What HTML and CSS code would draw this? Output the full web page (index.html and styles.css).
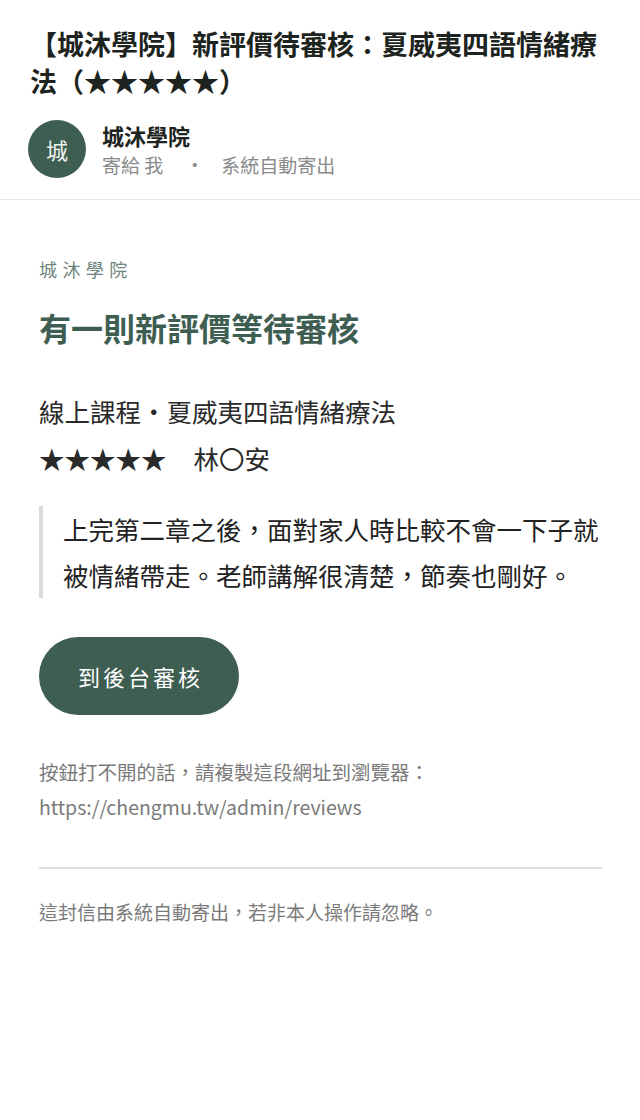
FILE: index.html
```html
<!DOCTYPE html>
<html lang="zh-Hant">
<head>
<meta charset="utf-8">
<title>新評價待審核</title>
<link rel="stylesheet" href="styles.css">
</head>
<body>
<div class="mail">
  <header class="mail-head">
    <h1 class="subject">【城沐學院】新評價待審核：夏威夷四語情緒療法（★★★★★）</h1>
    <div class="sender">
      <div class="avatar">城</div>
      <div class="sender-info">
        <div class="sender-name">城沐學院</div>
        <div class="sender-meta"><span>寄給 我</span><span class="dot">·</span><span>系統自動寄出</span></div>
      </div>
    </div>
  </header>
  <main class="mail-body">
    <div class="brand">城沐學院</div>
    <h2 class="headline">有一則新評價等待審核</h2>
    <div class="course">
      <div class="course-name">線上課程・夏威夷四語情緒療法</div>
      <div class="rating"><span class="stars">★★★★★</span><span class="reviewer">林〇安</span></div>
    </div>
    <blockquote class="quote">上完第二章之後，面對家人時比較不會一下子就被情緒帶走。老師講解很清楚，節奏也剛好。</blockquote>
    <a class="btn" href="#">到後台審核</a>
    <p class="help">按鈕打不開的話，請複製這段網址到瀏覽器：<br>https://chengmu.tw/admin/reviews</p>
    <hr class="rule">
    <p class="foot">這封信由系統自動寄出，若非本人操作請忽略。</p>
  </main>
</div>
</body>
</html>
```
FILE: styles.css
```css
* { box-sizing: border-box; }
html, body { margin: 0; padding: 0; background: #ffffff; }
body {
  font-family: "Noto Sans CJK TC", "Noto Sans", sans-serif;
  color: #222;
}
.mail-head {
  padding: 25px 30px 19px;
  border-bottom: 1px solid #e8e8e8;
}
.subject {
  margin: 0;
  font-size: 27px;
  line-height: 37px;
  font-weight: 700;
  color: #1d2420;
}
.sender {
  display: flex;
  align-items: flex-start;
  gap: 16px;
  margin-top: 21px;
}
.avatar {
  width: 58px;
  height: 58px;
  border-radius: 50%;
  background: #3e5e52;
  color: #eef3f0;
  font-size: 22px;
  display: flex;
  align-items: center;
  justify-content: center;
  margin-left: -2px;
}
.sender-name {
  font-size: 22px;
  line-height: 30px;
  font-weight: 700;
  color: #1d2420;
}
.sender-meta {
  font-size: 19px;
  line-height: 30px;
  color: #8a8a8a;
}
.dot { margin: 0 17px 0 22px; }
.mail-body {
  padding: 56px 38px 40px 39px;
}
.brand {
  font-size: 18px;
  line-height: 27px;
  letter-spacing: 0.3em;
  color: #6d857c;
}
.headline {
  margin: 22px 0 0;
  font-size: 32px;
  line-height: 45px;
  font-weight: 700;
  color: #3e5e52;
}
.course {
  margin-top: 37px;
  font-size: 25.5px;
  line-height: 47px;
  color: #2a2a2a;
}
.reviewer { margin-left: 27px; }
.quote {
  margin: 25px 0 0;
  padding: 0 0 0 20px;
  border-left: 4px solid #dcdcdc;
  font-size: 25.5px;
  line-height: 46px;
  color: #222;
}
.btn {
  display: inline-flex;
  align-items: center;
  justify-content: center;
  margin-top: 39px;
  width: 200px;
  height: 78px;
  border-radius: 39px;
  background: #3e5e52;
  color: #ffffff;
  font-size: 22px;
  letter-spacing: 3px;
  text-indent: 3px;
  text-decoration: none;
}
.help {
  margin: 39px 0 0;
  font-size: 19.5px;
  line-height: 35px;
  color: #7a7a7a;
}
.rule {
  margin: 43px 0 0;
  border: 0;
  border-top: 2px solid #e0e0e0;
  height: 0;
}
.foot {
  margin: 28px 0 0;
  font-size: 19px;
  line-height: 30px;
  color: #7a7a7a;
}
```
